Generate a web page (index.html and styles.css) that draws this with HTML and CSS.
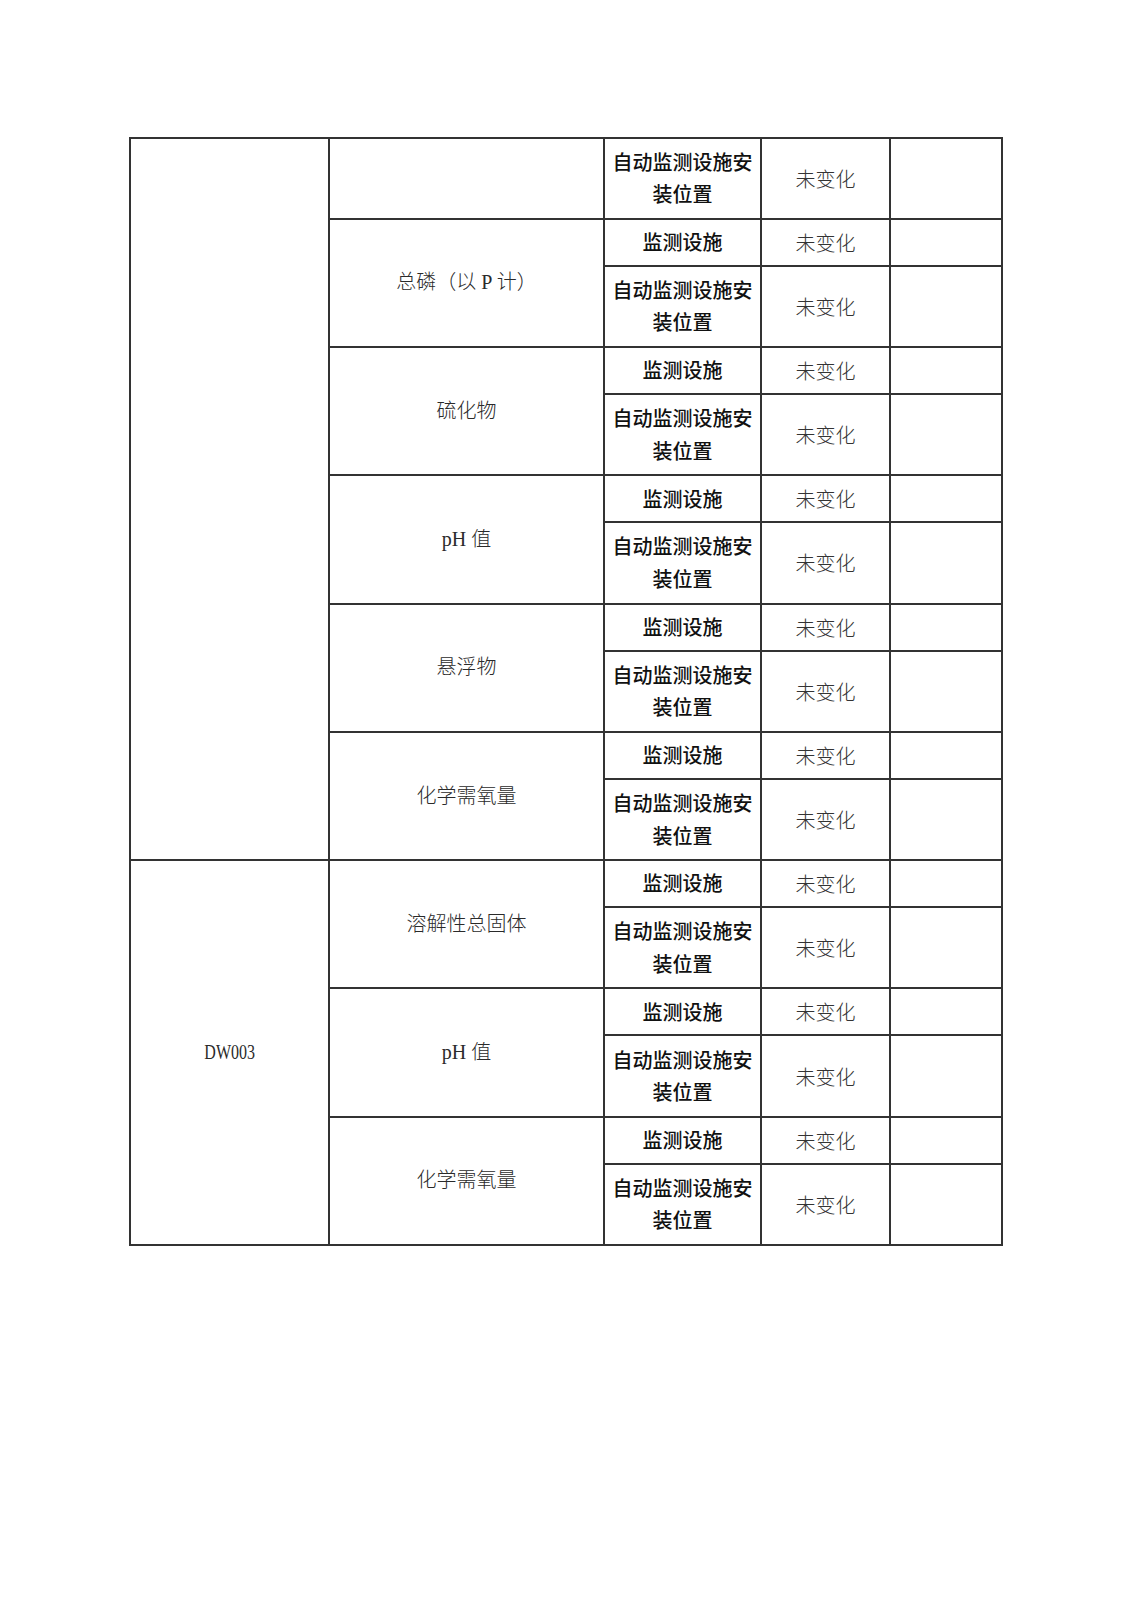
FILE: index.html
```html
<!DOCTYPE html>
<html lang="zh-CN">
<head>
<meta charset="utf-8">
<title>监测设施变化情况</title>
<link rel="stylesheet" href="styles.css">
</head>
<body>
<div class="page">
  <div class="grid">
    <div class="cell c1 span11"></div>
    <div class="cell c2"></div>
    <div class="cell c3">自动监测设施安装位置</div>
    <div class="cell c4">未变化</div>
    <div class="cell c5"></div>

    <div class="cell c2 span2">总磷（以 P 计）</div>
    <div class="cell c3">监测设施</div>
    <div class="cell c4">未变化</div>
    <div class="cell c5"></div>
    <div class="cell c3">自动监测设施安装位置</div>
    <div class="cell c4">未变化</div>
    <div class="cell c5"></div>

    <div class="cell c2 span2">硫化物</div>
    <div class="cell c3">监测设施</div>
    <div class="cell c4">未变化</div>
    <div class="cell c5"></div>
    <div class="cell c3">自动监测设施安装位置</div>
    <div class="cell c4">未变化</div>
    <div class="cell c5"></div>

    <div class="cell c2 span2">pH 值</div>
    <div class="cell c3">监测设施</div>
    <div class="cell c4">未变化</div>
    <div class="cell c5"></div>
    <div class="cell c3">自动监测设施安装位置</div>
    <div class="cell c4">未变化</div>
    <div class="cell c5"></div>

    <div class="cell c2 span2">悬浮物</div>
    <div class="cell c3">监测设施</div>
    <div class="cell c4">未变化</div>
    <div class="cell c5"></div>
    <div class="cell c3">自动监测设施安装位置</div>
    <div class="cell c4">未变化</div>
    <div class="cell c5"></div>

    <div class="cell c2 span2">化学需氧量</div>
    <div class="cell c3">监测设施</div>
    <div class="cell c4">未变化</div>
    <div class="cell c5"></div>
    <div class="cell c3">自动监测设施安装位置</div>
    <div class="cell c4">未变化</div>
    <div class="cell c5"></div>

    <div class="cell c1 span6"><span class="code">DW003</span></div>
    <div class="cell c2 span2">溶解性总固体</div>
    <div class="cell c3">监测设施</div>
    <div class="cell c4">未变化</div>
    <div class="cell c5"></div>
    <div class="cell c3">自动监测设施安装位置</div>
    <div class="cell c4">未变化</div>
    <div class="cell c5"></div>

    <div class="cell c2 span2">pH 值</div>
    <div class="cell c3">监测设施</div>
    <div class="cell c4">未变化</div>
    <div class="cell c5"></div>
    <div class="cell c3">自动监测设施安装位置</div>
    <div class="cell c4">未变化</div>
    <div class="cell c5"></div>

    <div class="cell c2 span2">化学需氧量</div>
    <div class="cell c3">监测设施</div>
    <div class="cell c4">未变化</div>
    <div class="cell c5"></div>
    <div class="cell c3">自动监测设施安装位置</div>
    <div class="cell c4">未变化</div>
    <div class="cell c5"></div>
  </div>
</div>
</body>
</html>
```
FILE: styles.css
```css
html, body {
  margin: 0;
  padding: 0;
  background: #ffffff;
}

.page {
  padding: 137px 0 0 129px;
  min-height: 1463px;
}

.grid {
  display: grid;
  width: max-content;
  grid-template-columns: 199px 275px 157px 129px 112px;
  grid-template-rows: 80.7px repeat(8, 47px 81.3px);
  border-top: 2px solid #333;
  border-left: 2px solid #333;
}

.cell {
  box-sizing: border-box;
  border-right: 2px solid #333;
  border-bottom: 2px solid #333;
  display: flex;
  align-items: center;
  justify-content: center;
  text-align: center;
  font-size: 20px;
  line-height: 33px;
  padding: 0 5px;
  font-family: "Liberation Serif", "Noto Sans CJK SC", serif;
  font-weight: 300;
  color: #2a2a2a;
}

.c1 { grid-column: 1; }
.c2 { grid-column: 2; }
.c3 {
  grid-column: 3;
  font-family: "Noto Sans CJK SC", sans-serif;
  font-weight: 500;
  color: #111;
  line-height: 32.5px;
}
.c4 {
  grid-column: 4;
  font-family: "Noto Sans CJK SC", sans-serif;
  font-weight: 300;
  color: #333;
}
.c5 { grid-column: 5; }

.code {
  display: inline-block;
  transform: scaleX(0.8);
  font-weight: 400;
}

.span2 { grid-row: span 2; }
.span6 { grid-row: span 6; }
.span11 { grid-row: span 11; }
```
